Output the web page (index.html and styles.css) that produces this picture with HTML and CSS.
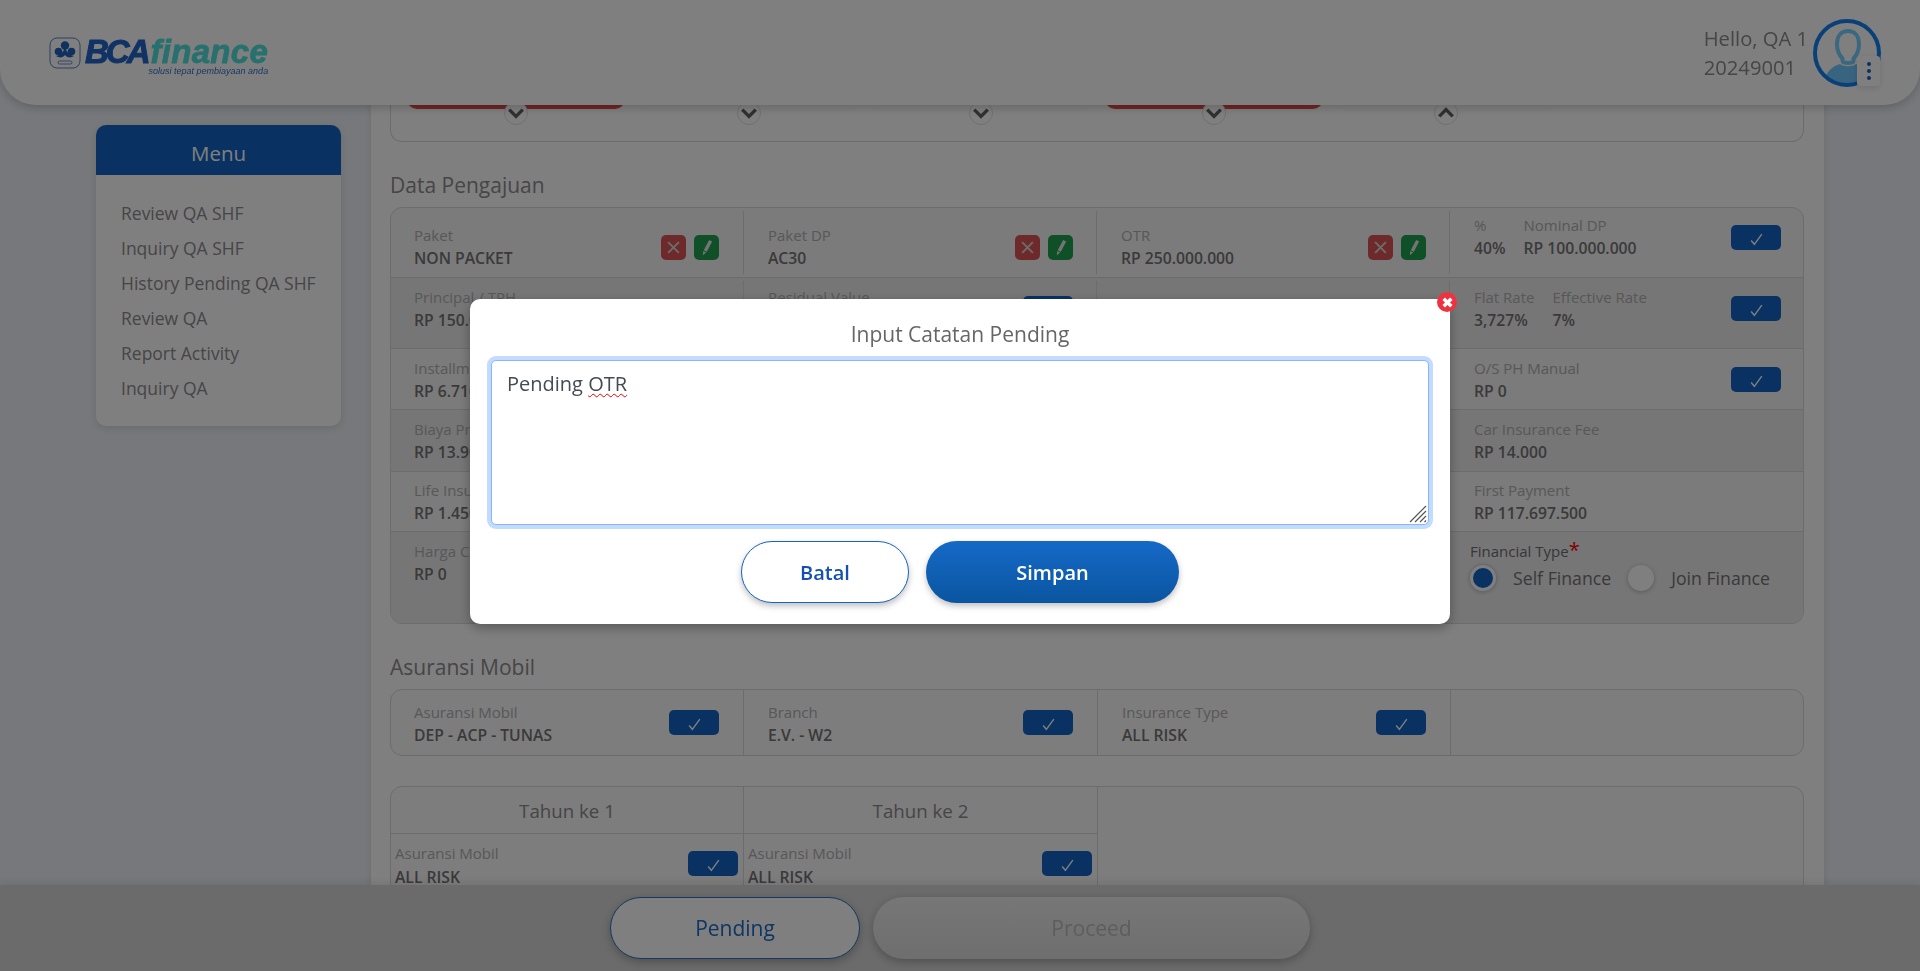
FILE: index.html
```html
<!DOCTYPE html>
<html lang="en">
<head>
  <meta charset="UTF-8" />
  <title>Review QA</title>
  <meta name="viewport" content="width=device-width, initial-scale=1.0" />
  <link rel="stylesheet" href="styles.css">
</head>
<body>
  <div class="page">
    <aside class="sidebar">
      <div class="sidebar-title">Menu</div>
      <nav class="sidebar-nav">
        <a>Review QA SHF</a>
        <a>Inquiry QA SHF</a>
        <a>History Pending QA SHF</a>
        <a>Review QA</a>
        <a>Report Activity</a>
        <a>Inquiry QA</a>
      </nav>
    </aside>

    <main class="panel">
      <div class="tiles-card">
        <div class="tiles">
          <div class="tile"><div class="tile-bar red"></div><span class="chev"><svg viewBox="0 0 16 10"><path d="M2 2l6 6 6-6"/></svg></span></div>
          <div class="tile"><div class="tile-bar"></div><span class="chev"><svg viewBox="0 0 16 10"><path d="M2 2l6 6 6-6"/></svg></span></div>
          <div class="tile"><div class="tile-bar"></div><span class="chev"><svg viewBox="0 0 16 10"><path d="M2 2l6 6 6-6"/></svg></span></div>
          <div class="tile"><div class="tile-bar red"></div><span class="chev"><svg viewBox="0 0 16 10"><path d="M2 2l6 6 6-6"/></svg></span></div>
          <div class="tile"><div class="tile-bar"></div><span class="chev"><svg viewBox="0 0 16 10"><path d="M2 8l6-6 6 6"/></svg></span></div>
        </div>
      </div>

      <h3 class="section-title">Data Pengajuan</h3>
      <div class="data-card">
        <div class="row row-1">
          <div class="cell">
            <div class="field"><label>Paket</label><b>NON PACKET</b></div>
            <div class="actions"><span class="btn-x"><svg viewBox="0 0 14 14"><path d="M2 2l10 10M12 2L2 12"/></svg></span><span class="btn-edit"><svg viewBox="0 0 14 16"><path d="M9.500 1l2.800 1.300-5 9.700-2.900-1.300zM4 11.400l2.700 1.300-3.200 2.600z"/></svg></span></div>
          </div>
          <div class="cell">
            <div class="field"><label>Paket DP</label><b>AC30</b></div>
            <div class="actions"><span class="btn-x"><svg viewBox="0 0 14 14"><path d="M2 2l10 10M12 2L2 12"/></svg></span><span class="btn-edit"><svg viewBox="0 0 14 16"><path d="M9.500 1l2.800 1.300-5 9.700-2.900-1.300zM4 11.400l2.700 1.300-3.200 2.600z"/></svg></span></div>
          </div>
          <div class="cell">
            <div class="field"><label>OTR</label><b>RP 250.000.000</b></div>
            <div class="actions"><span class="btn-x"><svg viewBox="0 0 14 14"><path d="M2 2l10 10M12 2L2 12"/></svg></span><span class="btn-edit"><svg viewBox="0 0 14 16"><path d="M9.500 1l2.800 1.300-5 9.700-2.900-1.300zM4 11.400l2.700 1.300-3.200 2.600z"/></svg></span></div>
          </div>
          <div class="cell cell-high">
            <div class="pair">
              <div class="field"><label>%</label><b>40%</b></div>
              <div class="field"><label>Nominal DP</label><b>RP 100.000.000</b></div>
            </div>
            <span class="btn-check"><svg viewBox="0 0 14 14"><path d="M2 8l3 3.500L12 2"/></svg></span>
          </div>
        </div>
        <div class="row row-2 shade">
          <div class="cell"><div class="field"><label>Principal / TPH</label><b>RP 150.000.000</b></div></div>
          <div class="cell">
            <div class="field"><label>Residual Value</label><b>RP 0</b></div>
            <span class="btn-check"><svg viewBox="0 0 14 14"><path d="M2 8l3 3.500L12 2"/></svg></span>
          </div>
          <div class="cell"></div>
          <div class="cell">
            <div class="pair">
              <div class="field"><label>Flat Rate</label><b>3,727%</b></div>
              <div class="field"><label>Effective Rate</label><b>7%</b></div>
            </div>
            <span class="btn-check"><svg viewBox="0 0 14 14"><path d="M2 8l3 3.500L12 2"/></svg></span>
          </div>
        </div>
        <div class="row row-3">
          <div class="cell"><div class="field"><label>Installment</label><b>RP 6.710.000</b></div></div>
          <div class="cell"></div>
          <div class="cell"></div>
          <div class="cell">
            <div class="field"><label>O/S PH Manual</label><b>RP 0</b></div>
            <span class="btn-check"><svg viewBox="0 0 14 14"><path d="M2 8l3 3.500L12 2"/></svg></span>
          </div>
        </div>
        <div class="row row-4 shade">
          <div class="cell"><div class="field"><label>Biaya Provisi</label><b>RP 13.900.000</b></div></div>
          <div class="cell"></div>
          <div class="cell"></div>
          <div class="cell"><div class="field"><label>Car Insurance Fee</label><b>RP 14.000</b></div></div>
        </div>
        <div class="row row-5">
          <div class="cell"><div class="field"><label>Life Insurance</label><b>RP 1.450.000</b></div></div>
          <div class="cell"></div>
          <div class="cell"></div>
          <div class="cell"><div class="field"><label>First Payment</label><b>RP 117.697.500</b></div></div>
        </div>
        <div class="row row-6 shade">
          <div class="cell"><div class="field"><label>Harga Cash</label><b>RP 0</b></div></div>
          <div class="cell"></div>
          <div class="cell"></div>
          <div class="cell cell-finance">
            <div class="finance-label">Financial Type<span class="req">*</span></div>
            <div class="radios">
              <span class="radio on"></span><span class="radio-text">Self Finance</span>
              <span class="radio"></span><span class="radio-text">Join Finance</span>
            </div>
          </div>
        </div>
      </div>

      <h3 class="section-title">Asuransi Mobil</h3>
      <div class="ins-card">
        <div class="ins-cell">
          <div class="field"><label>Asuransi Mobil</label><b>DEP - ACP - TUNAS</b></div>
          <span class="btn-check"><svg viewBox="0 0 14 14"><path d="M2 8l3 3.500L12 2"/></svg></span>
        </div>
        <div class="ins-cell">
          <div class="field"><label>Branch</label><b>E.V. - W2</b></div>
          <span class="btn-check"><svg viewBox="0 0 14 14"><path d="M2 8l3 3.500L12 2"/></svg></span>
        </div>
        <div class="ins-cell">
          <div class="field"><label>Insurance Type</label><b>ALL RISK</b></div>
          <span class="btn-check"><svg viewBox="0 0 14 14"><path d="M2 8l3 3.500L12 2"/></svg></span>
        </div>
        <div class="ins-cell"></div>
      </div>

      <div class="year-card">
        <div class="year-col">
          <div class="year-head">Tahun ke 1</div>
          <div class="year-item">
            <div class="field"><label>Asuransi Mobil</label><b>ALL RISK</b></div>
            <span class="btn-check"><svg viewBox="0 0 14 14"><path d="M2 8l3 3.500L12 2"/></svg></span>
          </div>
        </div>
        <div class="year-col">
          <div class="year-head">Tahun ke 2</div>
          <div class="year-item">
            <div class="field"><label>Asuransi Mobil</label><b>ALL RISK</b></div>
            <span class="btn-check"><svg viewBox="0 0 14 14"><path d="M2 8l3 3.500L12 2"/></svg></span>
          </div>
        </div>
      </div>
    </main>
  </div>

  <div class="footer-bar">
    <button class="btn-pending">Pending</button>
    <button class="btn-proceed">Proceed</button>
  </div>

  <header class="topbar">
    <div class="logo">
      <svg class="logo-mark" viewBox="0 0 32 32">
        <rect x="1" y="1" width="30" height="30" rx="7" fill="none" stroke="#2a5fb0" stroke-width="0.800"/>
        <circle cx="16" cy="8.500" r="4.200" fill="#2060c0"/>
        <circle cx="9.500" cy="14.500" r="3.800" fill="#2060c0"/>
        <circle cx="22.500" cy="14.500" r="3.800" fill="#2060c0"/>
        <path d="M16 10c-1.500 5-4 8-9 9 3 2 7 2 9-1 2 3 6 3 9 1-5-1-7.500-4-9-9z" fill="#2060c0"/>
        <rect x="9" y="24" width="14" height="3" rx="1.500" fill="none" stroke="#2a5fb0" stroke-width="0.700"/>
      </svg>
      <div class="logo-text">
        <div class="logo-name"><span class="logo-bca">BCA</span><span class="logo-finance">finance</span></div>
        <div class="logo-tag">solusi tepat pembiayaan anda</div>
      </div>
    </div>
    <div class="user">
      <div class="user-text">
        <div>Hello, QA 1</div>
        <div>20249001</div>
      </div>
      <div class="avatar">
        <svg viewBox="0 0 72 72">
          <defs><clipPath id="ring"><circle cx="36" cy="36" r="31"/></clipPath></defs>
          <path clip-path="url(#ring)" d="M14 62c2-8 8-13 15-15 3 3 13 3 16 0 6 2 10 5 12 9v14H20z" fill="#72c8ff"/>
          <path d="M37 14c-7.500 0-11 6-11 13 0 6 2 11 5.500 14.500v2c0 1.500 1.500 2.500 5.500 2.500s5.500-1 5.500-2.500v-2c3.500-3.500 5.500-8.500 5.500-14.500 0-7-3.500-13-11-13z" fill="none" stroke="#78d0ff" stroke-width="4"/>
          <circle cx="36" cy="36" r="32" fill="none" stroke="#1480f0" stroke-width="4"/>
        </svg>
        <span class="avatar-menu"><i></i><i></i><i></i></span>
      </div>
    </div>
  </header>

  <div class="backdrop">
    <div class="modal">
      <span class="modal-close"><svg viewBox="0 0 12 12"><path d="M2.500 2.500l7 7M9.500 2.500l-7 7"/></svg></span>
      <div class="modal-title">Input Catatan Pending</div>
      <div class="note-wrap">
        <div class="note" contenteditable="true" spellcheck="false">Pending <span class="typo">OTR</span></div>
        <svg class="note-grip" viewBox="0 0 18 18"><path d="M1 17L17 1M6 17L17 6M11 17l6-6M15.500 17l1.500-1.500"/></svg>
      </div>
      <div class="modal-actions">
        <button class="btn-batal">Batal</button>
        <button class="btn-simpan">Simpan</button>
      </div>
    </div>
  </div>
</body>
</html>
```

FILE: styles.css
```css
:root {
  --bg: #eef1f6;
  --card: #ffffff;
  --shade: #ececec;
  --line: #d8d8d8;
  --primary: #1264c4;
  --label: #b0b0b0;
  --value: #747474;
  --text: #8c8c8c;
}

* {
  box-sizing: border-box;
}

html, body {
  height: 100%;
}

body {
  font-family: 'Open Sans', sans-serif;
  background-color: var(--bg);
  margin: 0;
  overflow: hidden;
}

/* header */
.topbar {
  position: fixed;
  top: 0;
  left: 0;
  right: 0;
  height: 105px;
  background-color: #fff;
  border-radius: 0 0 36px 36px;
  box-shadow: 0 3px 10px rgba(0, 0, 0, 0.2);
  display: flex;
  justify-content: space-between;
  align-items: center;
  padding: 0 37px 0 49px;
}

.logo {
  display: flex;
  align-items: flex-start;
  gap: 4px;
  margin-top: 7px;
}

.logo-mark {
  width: 32px;
  height: 32px;
}

.logo-text {
  font-family: 'Liberation Sans', sans-serif;
  font-style: italic;
  font-weight: bold;
}

.logo-name {
  font-size: 33px;
  line-height: 30px;
  white-space: nowrap;
}

.logo-bca {
  color: #2264c8;
  letter-spacing: -3px;
  -webkit-text-stroke: 1px #2264c8;
}

.logo-finance {
  color: #50e0dc;
  letter-spacing: 0.300px;
  margin-left: 3px;
  -webkit-text-stroke: 0.800px #50e0dc;
}

.logo-tag {
  font-size: 9px;
  font-weight: normal;
  color: #2a70c8;
  line-height: 10px;
  margin-top: -1px;
  text-align: right;
  white-space: nowrap;
}

.user {
  display: flex;
  align-items: center;
  gap: 3px;
}

.user-text {
  font-size: 20.200px;
  line-height: 29px;
  color: var(--text);
}

.avatar {
  position: relative;
  width: 72px;
  height: 72px;
}

.avatar svg {
  width: 72px;
  height: 72px;
  display: block;
}

.avatar-menu {
  position: absolute;
  left: 46px;
  top: 39px;
  width: 23px;
  height: 30px;
  background-color: #fff;
  box-shadow: 0 2px 6px rgba(0, 0, 0, 0.12);
  display: flex;
  flex-direction: column;
  align-items: center;
  justify-content: center;
  gap: 3px;
  border-radius: 3px;
}

.avatar-menu i {
  width: 4px;
  height: 4px;
  border-radius: 50%;
  background-color: var(--primary);
}

/* layout */
.page {
  display: flex;
  padding-left: 96px;
  height: 100%;
  overflow: hidden;
}

.sidebar {
  width: 245px;
  height: 301px;
  margin: 125px 30px 0 0;
  background-color: var(--card);
  border-radius: 10px;
  box-shadow: 0 2px 10px rgba(0, 0, 0, 0.12);
}

.sidebar-title {
  height: 50px;
  padding-top: 3px;
  line-height: 50px;
  text-align: center;
  color: #fff;
  font-size: 20.500px;
  background-color: var(--primary);
  border-radius: 10px 10px 0 0;
}

.sidebar-nav {
  display: flex;
  flex-direction: column;
  padding: 21px 25px 20px;
}

.sidebar-nav a {
  font-size: 17.500px;
  line-height: 35px;
  color: var(--text);
  white-space: nowrap;
}

.panel {
  width: 1453px;
  padding: 0 20px 0 19px;
  background-color: var(--card);
  box-shadow: 0 0 8px rgba(0, 0, 0, 0.1);
}

.section-title {
  margin: 32px 0 11px;
  font-size: 21px;
  line-height: 22px;
  font-weight: 400;
  color: var(--text);
}

/* collapsed tiles under the header */
.tiles-card {
  height: 142px;
  border: 1px solid var(--line);
  border-top: 0;
  border-radius: 0 0 12px 12px;
  display: flex;
  align-items: flex-end;
  padding: 0 0 16px 9px;
}

.tiles {
  display: grid;
  grid-template-columns: repeat(5, 232.500px);
}

.tile {
  display: flex;
  flex-direction: column;
  align-items: center;
}

.tile-bar {
  width: 218px;
  height: 12px;
  border-radius: 0 0 10px 10px;
  background-color: #fff;
  box-shadow: 0 1px 4px rgba(0, 0, 0, 0.03);
}

.tile-bar.red {
  background-color: #e04a4a;
}

.chev {
  width: 24px;
  height: 24px;
  margin-top: -8px;
  border-radius: 50%;
  background-color: #fff;
  border: 1px solid #e0e0e0;
  display: flex;
  align-items: center;
  justify-content: center;
  position: relative;
}

.chev svg {
  width: 18px;
  height: 12px;
  fill: none;
  stroke: #606060;
  stroke-width: 3;
}

/* data table */
.data-card {
  border: 1px solid var(--line);
  border-radius: 12px;
  overflow: hidden;
  background-color: #f6f6f6;
}

.row {
  display: grid;
  grid-template-columns: 353px 353px 353px 1fr;
  border-bottom: 1px solid var(--line);
}

.row:last-child {
  border-bottom: 0;
}

.row.shade {
  background-color: var(--shade);
}

.row-1 { height: 70px; }
.row-2 { height: 71px; }
.row-3 { height: 61px; }
.row-4 { height: 62px; }
.row-5 { height: 60px; }
.row-6 { height: 91px; }

.cell {
  display: flex;
  justify-content: space-between;
  align-items: flex-start;
  margin: 3px 0;
  padding: 6px 23px 0 24px;
  border-right: 1px solid var(--line);
}

.cell:first-child {
  padding: 6px 24px 0 23px;
}

.cell:last-child {
  border-right: 0;
  padding-right: 22px;
}

.row-1 .cell {
  padding-top: 14px;
}

.row-1 .cell-high {
  padding-top: 4px;
}

.row-5 .cell {
  padding-top: 5px;
}

.field {
  display: flex;
  flex-direction: column;
}

.field label {
  font-size: 15px;
  line-height: 22px;
  margin: -1px 0 1px;
  color: var(--label);
  white-space: nowrap;
}

.field b {
  font-size: 15.700px;
  line-height: 22px;
  font-weight: 600;
  color: var(--value);
  white-space: nowrap;
}

.pair {
  display: flex;
  gap: 18px;
}

.actions {
  display: flex;
  gap: 8px;
  margin-top: 10px;
}

.btn-x, .btn-edit {
  width: 25px;
  height: 25px;
  border-radius: 5px;
  display: flex;
  align-items: center;
  justify-content: center;
}

.btn-x {
  background-color: #dc5454;
}

.btn-x svg {
  width: 15px;
  height: 15px;
  fill: none;
  stroke: #d8d8d8;
  stroke-width: 1.800;
}

.btn-edit {
  background-color: #1ea050;
}

.btn-edit svg {
  width: 15px;
  height: 17px;
  fill: #e8e8e8;
}

.btn-check {
  width: 50px;
  height: 25px;
  margin-top: 9px;
  flex-shrink: 0;
  border-radius: 5px;
  background-color: var(--primary);
  display: flex;
  align-items: flex-end;
  justify-content: center;
  padding-bottom: 3px;
}

.row-1 .btn-check {
  margin-top: 10px;
}

.btn-check svg {
  width: 15px;
  height: 15px;
  fill: none;
  stroke: #fff;
  stroke-width: 1.300;
}

.cell-finance {
  flex-direction: column;
  justify-content: flex-start;
  padding-left: 20px;
  padding-top: 4px;
}

.finance-label {
  font-size: 15px;
  line-height: 24px;
  color: #6e6e6e;
}

.req {
  color: #ff0000;
  font-size: 20px;
  line-height: 10px;
}

.radios {
  display: flex;
  align-items: center;
  height: 28px;
  margin-top: 1px;
}

.radio {
  width: 26px;
  height: 26px;
  border-radius: 50%;
  background-color: #fff;
  box-shadow: 0 1px 4px rgba(0, 0, 0, 0.25);
  flex-shrink: 0;
}

.radio.on {
  background-color: var(--primary);
  border: 3px solid #fff;
  box-shadow: 0 0 0 1px #c8d4e4, 0 1px 4px rgba(0, 0, 0, 0.25);
}

.radio-text {
  font-size: 17.700px;
  color: var(--value);
  margin: 0 17px;
  white-space: nowrap;
}

/* asuransi */
.ins-card {
  display: grid;
  grid-template-columns: 353px 354px 353px 1fr;
  height: 67px;
  border: 1px solid var(--line);
  border-radius: 12px;
  background-color: #fafafa;
}

.ins-cell {
  display: flex;
  justify-content: space-between;
  align-items: flex-start;
  padding: 12px 24px 0 24px;
  border-right: 1px solid var(--line);
}

.ins-cell:first-child {
  padding-left: 23px;
}

.ins-cell:last-child {
  border-right: 0;
}

.ins-cell .btn-check {
  margin-top: 8px;
}

.year-card {
  display: grid;
  grid-template-columns: 353px 354px;
  margin-top: 30px;
  height: 240px;
  border: 1px solid var(--line);
  border-radius: 12px;
  background-color: #fafafa;
}

.year-col {
  border-right: 1px solid var(--line);
}

.year-head {
  height: 47px;
  line-height: 47px;
  text-align: center;
  font-size: 18.700px;
  color: var(--text);
  border-bottom: 1px solid var(--line);
}

.year-item {
  display: flex;
  justify-content: space-between;
  align-items: flex-start;
  padding: 9px 5px 0 4px;
}

.year-item .btn-check {
  margin-top: 8px;
}

.year-item b {
  margin-top: 1px;
}

/* footer */
.footer-bar {
  position: fixed;
  left: 0;
  right: 0;
  bottom: 0;
  height: 86px;
  background-color: #d6d6d6;
  box-shadow: 0 -3px 8px rgba(0, 0, 0, 0.08);
  display: flex;
  justify-content: center;
  gap: 13px;
  padding-top: 12px;
}

.footer-bar button {
  height: 62px;
  border-radius: 31px;
  font-family: inherit;
  font-size: 21px;
  box-shadow: 0 3px 8px rgba(0, 0, 0, 0.25);
}

.btn-pending {
  width: 250px;
  background-color: #fff;
  border: 1px solid #2a70c8;
  color: #1f6ac8;
}

.btn-proceed {
  width: 437px;
  background-image: linear-gradient(#eeeeee, #dddddd);
  border: 0;
  color: #bbbbbb;
}

/* modal */
.backdrop {
  position: fixed;
  top: 0;
  left: 0;
  right: 0;
  bottom: 0;
  background-color: rgba(0, 0, 0, 0.5);
  display: flex;
  justify-content: center;
  align-items: flex-start;
  padding-top: 299px;
}

.modal {
  position: relative;
  width: 980px;
  height: 325px;
  padding: 23px 21px 0;
  background-color: #fff;
  border-radius: 10px;
  box-shadow: 0 4px 12px rgba(0, 0, 0, 0.3);
}

.modal-close {
  position: absolute;
  top: -7px;
  right: -7px;
  width: 20px;
  height: 20px;
  border-radius: 50%;
  background-color: #ee3340;
  display: flex;
  align-items: center;
  justify-content: center;
}

.modal-close svg {
  width: 13px;
  height: 13px;
  fill: none;
  stroke: #fff;
  stroke-width: 3.200;
}

.modal-title {
  text-align: center;
  font-size: 21px;
  line-height: 24px;
  color: #666;
  margin-bottom: 14px;
}

.note-wrap {
  position: relative;
}

.note {
  width: 938px;
  height: 165px;
  padding: 10px 15px;
  font-size: 20px;
  line-height: 26px;
  color: #444b52;
  background-color: #fff;
  border: 1px solid #86b7fe;
  border-radius: 5px;
  outline: 0;
  box-shadow: 0 0 0 4px rgba(13, 110, 253, 0.25);
}

.note-grip {
  position: absolute;
  right: 2px;
  bottom: 2px;
  width: 18px;
  height: 18px;
  fill: none;
  stroke: #555;
  stroke-width: 1.200;
}

.typo {
  text-decoration: underline wavy #f00000 1px;
  text-underline-offset: 2px;
}

.modal-actions {
  display: flex;
  justify-content: center;
  gap: 17px;
  margin-top: 16px;
}

.modal-actions button {
  height: 62px;
  border-radius: 31px;
  font-family: inherit;
  font-size: 20px;
  font-weight: 600;
  box-shadow: 0 3px 6px rgba(0, 0, 0, 0.25);
}

.btn-batal {
  width: 168px;
  background-color: #fff;
  border: 1px solid #1565c0;
  color: #1450b0;
}

.btn-simpan {
  width: 253px;
  border: 0;
  color: #fff;
  background-image: linear-gradient(#1569c7, #0a55a0);
}
```
